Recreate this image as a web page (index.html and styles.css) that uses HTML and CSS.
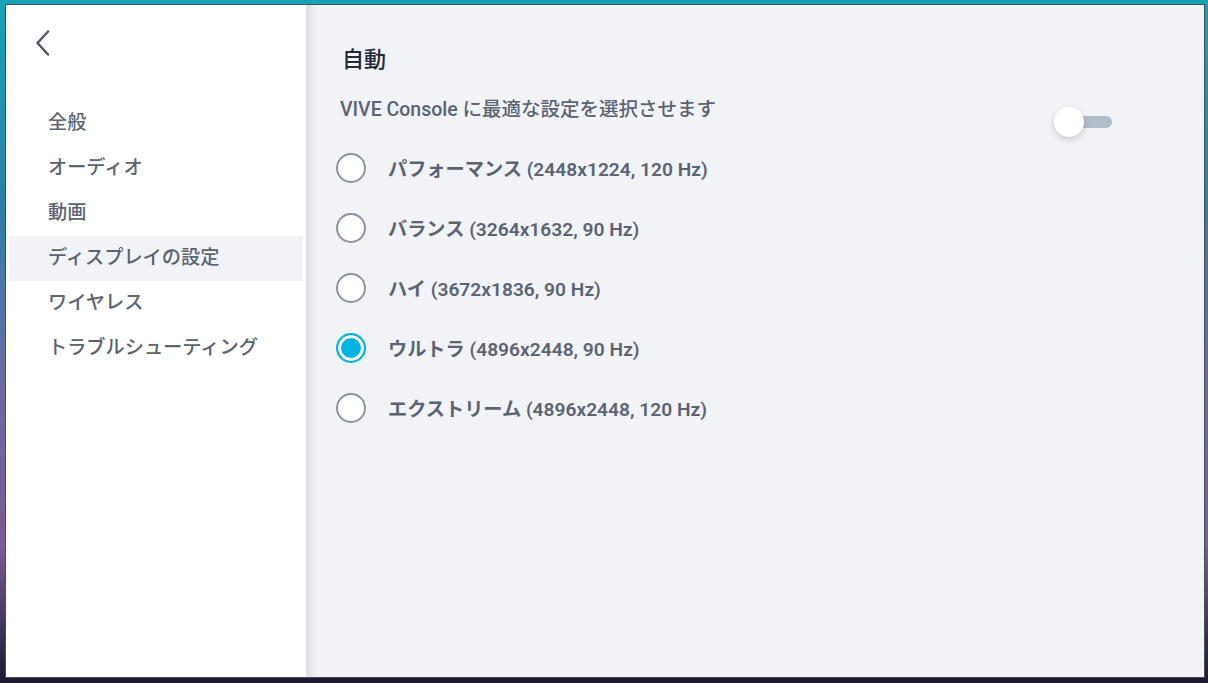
FILE: index.html
```
<!DOCTYPE html>
<html lang="ja">
<head>
<meta charset="utf-8">
<link rel="stylesheet" href="styles.css">
</head>
<body>
<div class="window">
  <aside class="sidebar">
    <div class="back">
      <svg width="16" height="26" viewBox="0 0 16 26"><path d="M13 1.5 L2.5 13 L13 24.5" fill="none" stroke="#4f5867" stroke-width="2.5" stroke-linecap="round" stroke-linejoin="round"/></svg>
    </div>
    <nav class="nav">
      <div class="nav-item">全般</div>
      <div class="nav-item">オーディオ</div>
      <div class="nav-item">動画</div>
      <div class="nav-item active">ディスプレイの設定</div>
      <div class="nav-item">ワイヤレス</div>
      <div class="nav-item">トラブルシューティング</div>
    </nav>
  </aside>
  <main class="main">
    <h1 class="title">自動</h1>
    <div class="auto-row">
      <div class="subtitle">VIVE Console に最適な設定を選択させます</div>
      <div class="toggle"><div class="track"></div><div class="thumb"></div></div>
    </div>
    <div class="options">
      <div class="option"><span class="radio"></span><span class="label">パフォーマンス (2448x1224, 120 Hz)</span></div>
      <div class="option"><span class="radio"></span><span class="label">バランス (3264x1632, 90 Hz)</span></div>
      <div class="option"><span class="radio"></span><span class="label">ハイ (3672x1836, 90 Hz)</span></div>
      <div class="option"><span class="radio checked"></span><span class="label">ウルトラ (4896x2448, 90 Hz)</span></div>
      <div class="option"><span class="radio"></span><span class="label">エクストリーム (4896x2448, 120 Hz)</span></div>
    </div>
  </main>
</div>
</body>
</html>
```
FILE: styles.css
```
html, body { margin: 0; padding: 0; }
body {
  width: 1208px;
  height: 683px;
  overflow: hidden;
  background: linear-gradient(180deg, #16a3b6 0%, #2d7fa8 30%, #6a6aa6 55%, #7a5c96 80%, #1a1830 100%);
  padding: 4px 0 0 5px;
  box-sizing: border-box;
  font-family: Roboto, "Noto Sans CJK JP", sans-serif;
}
.window {
  width: 1200px;
  height: 674px;
  box-sizing: border-box;
  border: 1px solid #4a4d55;
  display: flex;
  background: #f2f3f7;
}
.sidebar {
  width: 300px;
  flex: none;
  background: #ffffff;
  padding: 0 3px;
  box-sizing: border-box;
  position: relative;
  z-index: 1;
}
.back {
  height: 96px;
  padding: 25px 0 0 26px;
  box-sizing: border-box;
}
.nav { display: flex; flex-direction: column; }
.nav-item {
  height: 45px;
  line-height: 44px;
  padding-left: 39px;
  font-size: 19.2px;
  font-weight: 500;
  color: #5b6471;
}
.nav-item.active { background: #f2f3f7; }
.main {
  flex: 1;
  padding: 39px 0 0 36px;
  box-shadow: inset 12px 0 10px -8px rgba(120, 125, 140, 0.22);
}
.title {
  margin: 0;
  font-size: 22px;
  line-height: 32px;
  font-weight: 500;
  color: #1f2937;
}
.auto-row {
  display: flex;
  align-items: flex-start;
  margin-top: 21px;
  width: 770px;
}
.subtitle {
  margin-left: -2px;
  font-size: 19.5px;
  line-height: 26px;
  font-weight: 500;
  color: #5a6472;
  flex: 1;
}
.toggle {
  position: relative;
  width: 58px;
  height: 30px;
  margin-top: 10px;
  flex: none;
}
.track {
  position: absolute;
  left: 6px;
  top: 9px;
  width: 52px;
  height: 12px;
  border-radius: 6px;
  background: #b2bdca;
}
.thumb {
  position: absolute;
  left: 0;
  top: 0;
  width: 30px;
  height: 30px;
  border-radius: 50%;
  background: #ffffff;
  box-shadow: 0 3px 6px rgba(60, 70, 90, 0.22);
}
.options {
  display: flex;
  flex-direction: column;
  margin-top: 1px;
  margin-left: -6px;
}
.option {
  height: 60px;
  display: flex;
  align-items: center;
}
.radio {
  width: 30px;
  height: 30px;
  box-sizing: border-box;
  border-radius: 50%;
  border: 2px solid #8a93a0;
  background: #ffffff;
  flex: none;
}
.radio.checked {
  border-color: #00b1e4;
  background: #00b1e4;
  box-shadow: inset 0 0 0 3px #ffffff;
}
.label {
  margin-left: 22px;
  font-size: 19.2px;
  font-weight: 600;
  color: #5a6472;
}
```
